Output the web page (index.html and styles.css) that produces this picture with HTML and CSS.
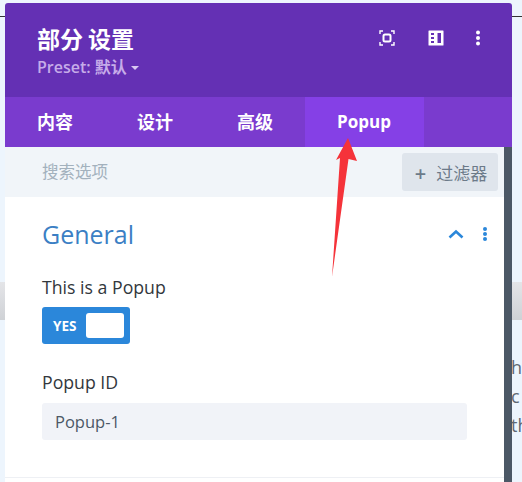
FILE: index.html
```html
<!DOCTYPE html>
<html lang="en">
<head>
  <meta charset="UTF-8">
  <title>部分 设置</title>
  <link rel="stylesheet" href="styles.css">
</head>
<body>
  <div class="page">
    <div class="gutter gutter-left">
      <div class="line"></div>
      <div class="band"></div>
    </div>

    <div class="modal">
      <header class="head">
        <div class="head-text">
          <h1>部分 设置</h1>
          <div class="preset">Preset: 默认 <span class="caret"></span></div>
        </div>
        <div class="head-icons">
          <svg width="20" height="20" viewBox="0 0 20 20" fill="none" stroke="#fff" stroke-width="1.4">
            <path d="M3 6V3h3M14 3h3v3M17 14v3h-3M6 17H3v-3"/>
            <rect x="6.500" y="6.500" width="7" height="7" rx="1.500" stroke-width="2"/>
          </svg>
          <svg width="18" height="18" viewBox="0 0 18 18">
            <path fill="#fff" fill-rule="evenodd" d="M2 1.500h14a.5.5 0 0 1 .5.5v14a.5.5 0 0 1-.5.5H2a.5.5 0 0 1-.5-.5V2a.5.5 0 0 1 .5-.5zM10.500 4v10H14V4zM4 4v2h3V4zM4 8v2h3V8zM4 12v2h3v-2z"/>
          </svg>
          <svg width="6" height="18" viewBox="0 0 6 18" fill="#fff">
            <circle cx="3" cy="3.500" r="2"/>
            <circle cx="3" cy="9" r="2"/>
            <circle cx="3" cy="14.500" r="2"/>
          </svg>
        </div>
      </header>

      <nav class="tabs">
        <a class="tab">内容</a>
        <a class="tab">设计</a>
        <a class="tab">高级</a>
        <a class="tab active">Popup</a>
      </nav>

      <div class="main">
        <div class="scroll">
          <div class="search">
            <span class="placeholder">搜索选项</span>
            <button class="filter" type="button"><span class="plus">+</span>过滤器</button>
          </div>

          <section class="group">
            <div class="group-head">
              <h2>General</h2>
              <div class="group-icons">
                <svg width="16" height="10" viewBox="0 0 16 10" fill="none" stroke="#2b87da" stroke-width="2.600">
                  <path d="M1.500 8.500 8 2.500l6.500 6"/>
                </svg>
                <svg width="6" height="16" viewBox="0 0 6 16" fill="#2b87da">
                  <circle cx="3" cy="3" r="2"/>
                  <circle cx="3" cy="8" r="2"/>
                  <circle cx="3" cy="13" r="2"/>
                </svg>
              </div>
            </div>

            <label class="field-label">This is a Popup</label>
            <div class="toggle">
              <span>YES</span>
              <i class="knob"></i>
            </div>

            <label class="field-label second">Popup ID</label>
            <div class="input">Popup-1</div>
          </section>
        </div>
        <div class="scrollbar"></div>
      </div>

      <svg class="arrow" width="40" height="150" viewBox="0 0 40 150">
        <polygon fill="#f5333a" points="18,0 27,23 18.500,21 2,139 10,20 6,22"/>
      </svg>
    </div>

    <div class="gutter gutter-right">
      <div class="line"></div>
      <div class="band"></div>
      <p class="behind">h<br>c<br>th</p>
    </div>
  </div>
</body>
</html>
```

FILE: styles.css
```css
* {
  box-sizing: border-box;
}
html, body {
  margin: 0;
  height: 100%;
}
body {
  background: #edf5fd;
  font-family: "Open Sans", "Noto Sans CJK SC", sans-serif;
  overflow: hidden;
}
.page {
  display: flex;
  height: 482px;
  width: 522px;
}

.gutter {
  padding-top: 16px;
  overflow: hidden;
}
.gutter-left {
  width: 5px;
}
.gutter-right {
  width: 10px;
}
.line {
  height: 1px;
  background: #333;
}
.band {
  height: 38px;
  margin-top: 265px;
  background: linear-gradient(#e4e5e8, #cfd2d6);
}
.behind {
  margin: 33px 0 0 -1px;
  font-size: 18px;
  line-height: 29px;
  color: #5f6872;
  white-space: nowrap;
}

.modal {
  position: relative;
  width: 507px;
  margin-top: 3px;
  display: flex;
  flex-direction: column;
}

.head {
  height: 94px;
  padding: 21px 31px 0 32px;
  display: flex;
  justify-content: space-between;
  background: #6430b4;
  border-radius: 3px 3px 0 0;
  color: #fff;
}
h1 {
  margin: 0;
  font-size: 23px;
  line-height: 30px;
  font-weight: 700;
  word-spacing: -1px;
}
.preset {
  margin-top: 3px;
  font-size: 16px;
  line-height: 20px;
  font-weight: 600;
  color: #c6ace9;
}
.caret {
  display: inline-block;
  margin-left: 0;
  vertical-align: 3px;
  border: 4px solid transparent;
  border-top-color: #d9c8f2;
  border-bottom: 0;
}
.head-icons {
  display: flex;
  align-items: center;
  gap: 30px;
  height: 28px;
}

.tabs {
  display: flex;
  height: 50px;
  background: #7a3bce;
}
.tab {
  padding: 0 32px;
  width: 100px;
  font-size: 18px;
  line-height: 50px;
  font-weight: 700;
  color: #fff;
  white-space: nowrap;
}
.tab.active {
  width: 119px;
  font-size: 17px;
  background: #8540e6;
}

.main {
  flex: 1;
  display: flex;
  min-height: 0;
}
.scroll {
  flex: 1;
  background: #fff;
}
.scrollbar {
  width: 8px;
  background: #4c5866;
}

.search {
  height: 50px;
  padding: 6px 6px 0 37px;
  display: flex;
  justify-content: space-between;
  background: #f1f5f9;
}
.placeholder {
  font-size: 16.500px;
  line-height: 38px;
  color: #a3b1bd;
}
.filter {
  width: 96px;
  height: 38px;
  padding: 0 0 0 2px;
  border: 0;
  border-radius: 3px;
  background: #dfe5ec;
  font-family: inherit;
  font-size: 17px;
  color: #6c7a89;
}
.plus {
  margin-right: 10px;
  font-size: 20px;
  font-weight: 600;
  line-height: 1;
  vertical-align: -1px;
}

.group {
  padding: 19px 16px 0 37px;
  height: 281px;
  border-bottom: 1px solid #eef0f4;
}
.group-head {
  display: flex;
  justify-content: space-between;
  align-items: center;
  height: 36px;
}
h2 {
  margin: 0;
  font-size: 25px;
  font-weight: 400;
  color: #3b7fc4;
}
.group-icons {
  display: flex;
  align-items: center;
  gap: 18px;
}
.field-label {
  display: block;
  margin: 23px 0 0;
  font-size: 17.700px;
  line-height: 24px;
  color: #32373c;
}
.field-label.second {
  margin-top: 26px;
}
.toggle {
  display: flex;
  align-items: center;
  justify-content: space-between;
  width: 88px;
  height: 37px;
  margin-top: 8px;
  padding: 0 6px 0 11px;
  border-radius: 3px;
  background: #2b87da;
  color: #fff;
  font-size: 13.500px;
  font-weight: 700;
}
.knob {
  width: 38px;
  height: 25px;
  border-radius: 3px;
  background: #fff;
}
.input {
  width: 425px;
  height: 37px;
  margin-top: 9px;
  padding-left: 13px;
  border-radius: 3px;
  background: #f1f3f8;
  font-size: 16.500px;
  line-height: 37px;
  color: #4c5866;
}

.arrow {
  position: absolute;
  left: 325px;
  top: 135px;
}
```
